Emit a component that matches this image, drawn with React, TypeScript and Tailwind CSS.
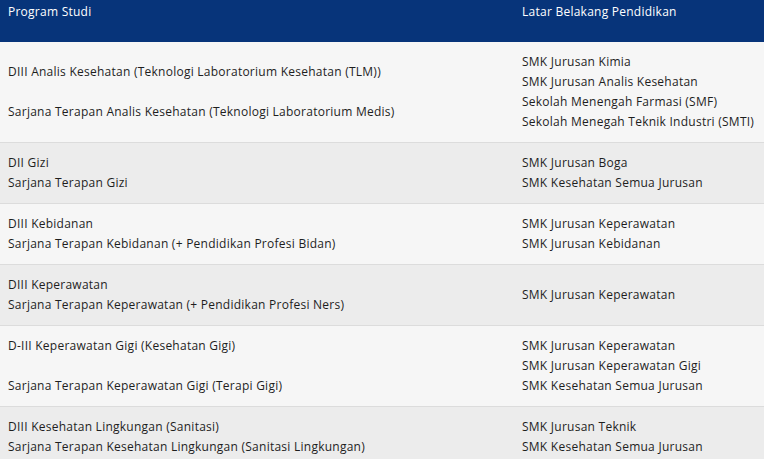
import React from "react";

type Row = { left: React.ReactNode; right: string[]; bg: string };

const rows: Row[] = [
  {
    left: (
      <>
        DIII Analis Kesehatan (Teknologi Laboratorium Kesehatan (TLM))
        <br />
        <br />
        Sarjana Terapan Analis Kesehatan (Teknologi Laboratorium Medis)
      </>
    ),
    right: [
      "SMK Jurusan Kimia",
      "SMK Jurusan Analis Kesehatan",
      "Sekolah Menengah Farmasi (SMF)",
      "Sekolah Menegah Teknik Industri (SMTI)",
    ],
    bg: "bg-[#f6f6f6]",
  },
  {
    left: (
      <>
        DII Gizi
        <br />
        Sarjana Terapan Gizi
      </>
    ),
    right: ["SMK Jurusan Boga", "SMK Kesehatan Semua Jurusan"],
    bg: "bg-[#ececec]",
  },
  {
    left: (
      <>
        DIII Kebidanan
        <br />
        Sarjana Terapan Kebidanan (+ Pendidikan Profesi Bidan)
      </>
    ),
    right: ["SMK Jurusan Keperawatan", "SMK Jurusan Kebidanan"],
    bg: "bg-[#f6f6f6]",
  },
  {
    left: (
      <>
        DIII Keperawatan
        <br />
        Sarjana Terapan Keperawatan (+ Pendidikan Profesi Ners)
      </>
    ),
    right: ["SMK Jurusan Keperawatan"],
    bg: "bg-[#ececec]",
  },
  {
    left: (
      <>
        D-III Keperawatan Gigi (Kesehatan Gigi)
        <br />
        <br />
        Sarjana Terapan Keperawatan Gigi (Terapi Gigi)
      </>
    ),
    right: [
      "SMK Jurusan Keperawatan",
      "SMK Jurusan Keperawatan Gigi",
      "SMK Kesehatan Semua Jurusan",
    ],
    bg: "bg-[#f6f6f6]",
  },
  {
    left: (
      <>
        DIII Kesehatan Lingkungan (Sanitasi)
        <br />
        Sarjana Terapan Kesehatan Lingkungan (Sanitasi Lingkungan)
      </>
    ),
    right: ["SMK Jurusan Teknik", "SMK Kesehatan Semua Jurusan"],
    bg: "bg-[#ececec]",
  },
];

export default function App() {
  return (
    <div
      className="w-[764px] h-[459px] overflow-hidden bg-[#f6f6f6] text-[12px] leading-[20px] tracking-[0.25px] text-[#1e1e1e]"
      style={{ fontFamily: '"Open Sans", "Noto Sans", sans-serif' }}
    >
      <div className="grid grid-cols-[514px_1fr] h-[42px] bg-[#07347a] text-white">
        <div className="px-2 pt-[2px]">Program Studi</div>
        <div className="px-2 pt-[2px]">Latar Belakang Pendidikan</div>
      </div>
      {rows.map((r, i) => (
        <div
          key={i}
          className={`grid grid-cols-[514px_1fr] items-center border-b border-[#dcdcdc] ${r.bg}`}
        >
          <div className="px-2 py-[10px] whitespace-nowrap">{r.left}</div>
          <div className="px-2 py-[10px] whitespace-nowrap">
            {r.right.map((t) => (
              <div key={t}>{t}</div>
            ))}
          </div>
        </div>
      ))}
    </div>
  );
}
